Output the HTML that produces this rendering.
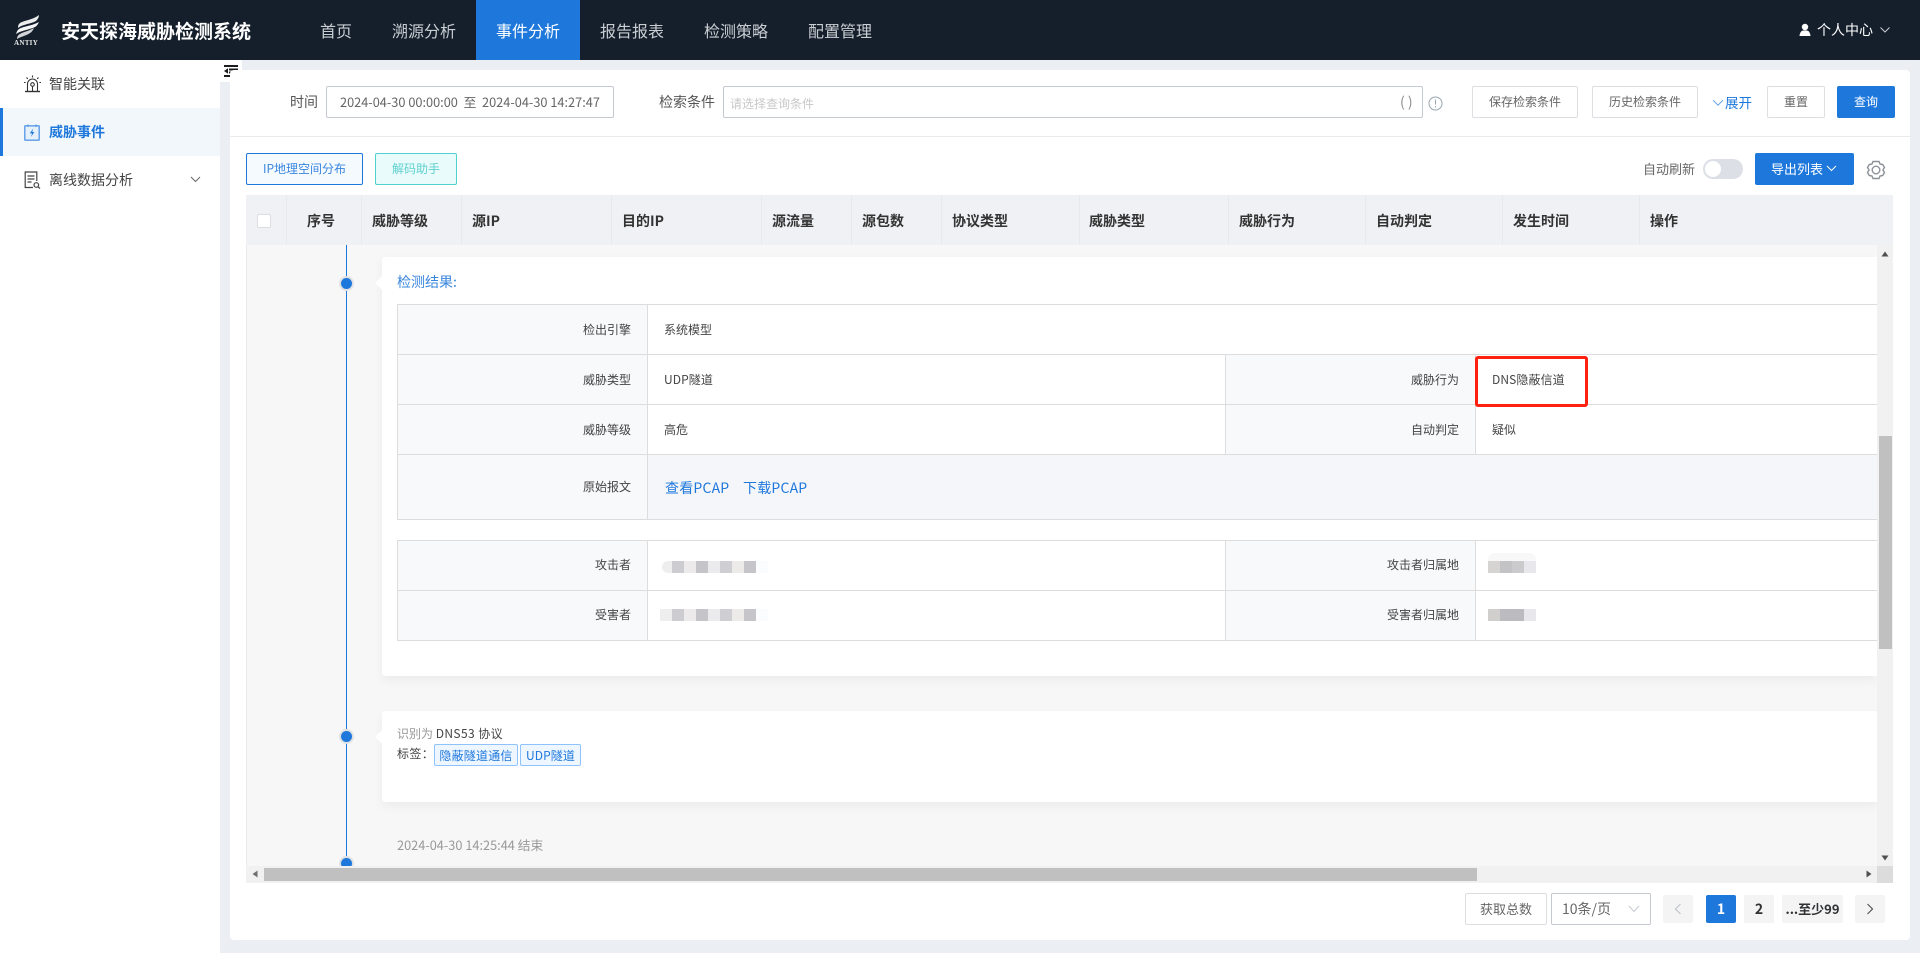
<!DOCTYPE html>
<html lang="zh-CN">
<head>
<meta charset="utf-8">
<title>安天探海威胁检测系统</title>
<style>
html,body{margin:0;padding:0;width:1920px;height:953px;overflow:hidden;background:#ebeef3;}
body{position:relative;font-family:"Noto Sans CJK SC","Liberation Sans",sans-serif;font-size:12px;color:#333;}
div,span,a,svg{position:absolute;box-sizing:border-box;}
.t{white-space:nowrap;line-height:20px;height:20px;}
.nav{font-size:16px;color:#c9ced3;top:19px;line-height:22px;height:22px;white-space:nowrap;}
.b{border:1px solid #dcdee2;border-radius:2px;background:#fff;text-align:center;line-height:30px;color:#666;font-size:12px;white-space:nowrap;}
.th{font-size:14px;font-weight:700;color:#333;top:211px;white-space:nowrap;line-height:20px;}
.cs{top:195px;width:1px;height:49px;background:#e8e9ee;}
.lab{background:#f8f9fb;}
.hl{left:397px;width:1480px;height:1px;background:#dddddd;}
.vl{width:1px;background:#dddddd;}
.r{font-size:12px;color:#444;white-space:nowrap;text-align:right;line-height:20px;}
.v{font-size:12px;color:#444;white-space:nowrap;line-height:20px;}
.m{height:12px;width:12px;}
.pg{top:895px;height:28px;background:#f4f4f5;border-radius:2px;text-align:center;line-height:28px;font-weight:700;font-size:13px;color:#303133;white-space:nowrap;}
</style>
</head>
<body>
<!-- Header -->
<div style="left:0;top:0;width:1920px;height:60px;background:#151f2b;"></div>
<svg style="left:14px;top:14px;" width="28" height="26" viewBox="0 0 28 26">
<path d="M25 1 C20 5 13 6 8 8 C5 9 4 11 4 14 C9 10 17 10 22 7 C24 5 25 3 25 1Z" fill="#ececec"/>
<path d="M25 8 C20 11 12 12 7 14 C4 15 3 17 2 20 C8 16 15 16 21 13 C23 12 24 10 25 8Z" fill="#f6f6f6"/>
<path d="M20 14 C15 17 9 18 6 20 C4 21 3 23 3 25 C8 22 12 22 16 19 C18 18 19 16 20 14Z" fill="#d2d4d7"/>
</svg>
<div class="t" style="left:14px;top:39px;width:24px;text-align:center;font:bold 7px/9px 'Liberation Serif',serif;color:#e8e8e8;letter-spacing:.3px;height:9px;">ANTIY</div>
<div class="t" style="left:61px;top:18px;font-size:19px;font-weight:700;color:#fff;line-height:26px;height:26px;">安天探海威胁检测系统</div>
<div style="left:476px;top:0;width:104px;height:60px;background:#1e78dc;"></div>
<div class="nav" style="left:320px;">首页</div>
<div class="nav" style="left:392px;">溯源分析</div>
<div class="nav" style="left:496px;color:#fff;">事件分析</div>
<div class="nav" style="left:600px;">报告报表</div>
<div class="nav" style="left:704px;">检测策略</div>
<div class="nav" style="left:808px;">配置管理</div>
<svg style="left:1798px;top:23px;" width="14" height="14" viewBox="0 0 14 14"><circle cx="7" cy="4" r="3.2" fill="#fff"/><path d="M1.5 13 Q2 8 5 7.5 L9 7.5 Q12 8 12.5 13Z" fill="#fff"/></svg>
<div class="t" style="left:1817px;top:20px;font-size:14px;color:#fff;">个人中心</div>
<svg style="left:1879px;top:26px;" width="12" height="8" viewBox="0 0 12 8"><path d="M1.5 1.5 L6 6 L10.5 1.5" fill="none" stroke="#c9ced3" stroke-width="1"/></svg>

<!-- Sidebar -->
<div style="left:0;top:60px;width:220px;height:893px;background:#fff;"></div>
<div style="left:220px;top:60px;width:22px;height:22px;background:#fff;"></div>
<svg style="left:224px;top:65px;" width="14" height="12" viewBox="0 0 14 12"><path d="M0 1h14M5 4.500h9M5 7.500h9M0 11h14" stroke="#1c1c1c" stroke-width="2" fill="none"/><path d="M4 3.200 L0 6 L4 8.800Z" fill="#1c1c1c"/></svg>
<div style="left:0;top:108px;width:220px;height:48px;background:#f2f7fc;"></div>
<div style="left:0;top:108px;width:3px;height:48px;background:#1e78dc;"></div>
<svg style="left:24px;top:75px;" width="17" height="18" viewBox="0 0 17 18" fill="none" stroke="#333" stroke-width="1.1"><path d="M3.5 16V9a5 5 0 0 1 10 0v7"/><path d="M1 16.5h15" stroke-width="1.4"/><circle cx="8.5" cy="9.5" r="1.8"/><path d="M8.500 11v5M8.500 0.500v2M2.500 2.500l1.300 1.300M14.500 2.500l-1.300 1.300M0 7.500h1.600M15.400 7.500H17"/></svg>
<svg style="left:24px;top:124px;" width="16" height="17" viewBox="0 0 16 17" fill="none"><rect x=".8" y="1.8" width="14.4" height="14.4" fill="#e6f0fb" stroke="#5a9be6" stroke-width="1.4" rx=".5"/><path d="M4 .5v2.500M12 .5v2.500" stroke="#5a9be6" stroke-width="1.200"/><path d="M9.200 4.500 L5.800 9.400h2.300l-1.200 3.600 3.500-5H8.200Z" fill="#1e78dc"/></svg>
<svg style="left:24px;top:171px;" width="17" height="18" viewBox="0 0 17 18" fill="none" stroke="#444" stroke-width="1.200"><path d="M9 16.500H1.200V1h11.600v9"/><path d="M3.500 5h7M3.500 8h7M3.500 11h4"/><circle cx="12.300" cy="14" r="2.300"/><path d="M14 15.700l2 1.800"/></svg>
<div class="t" style="left:49px;top:74px;font-size:14px;color:#444;">智能关联</div>
<div class="t" style="left:49px;top:122px;font-size:14px;font-weight:700;color:#1e78dc;">威胁事件</div>
<div class="t" style="left:49px;top:170px;font-size:14px;color:#444;">离线数据分析</div>
<svg style="left:190px;top:176px;" width="11" height="7" viewBox="0 0 11 7"><path d="M1 1 L5.500 5.500 L10 1" fill="none" stroke="#666" stroke-width="1"/></svg>

<!-- Main card -->
<div style="left:230px;top:70px;width:1680px;height:870px;background:#fff;border-radius:4px;"></div>
<div style="left:230px;top:136px;width:1680px;height:1px;background:#e8eaec;"></div>

<!-- Search row -->
<div class="t" style="left:290px;top:92px;font-size:14px;color:#555;">时间</div>
<div style="left:326px;top:86px;width:288px;height:32px;border:1px solid #c5c9d0;border-radius:2px;"></div>
<div class="t" style="left:340px;top:92px;font-size:12.750px;color:#666;">2024-04-30 00:00:00 &nbsp;至&nbsp; 2024-04-30 14:27:47</div>
<div class="t" style="left:659px;top:92px;font-size:14px;color:#555;">检索条件</div>
<div style="left:723px;top:86px;width:700px;height:32px;border:1px solid #c5c9d0;border-radius:2px;"></div>
<div class="t" style="left:730px;top:94px;font-size:12px;color:#c8c8c8;">请选择查询条件</div>
<div class="t" style="left:1400px;top:92px;font-size:14px;color:#888;">( )</div>
<svg style="left:1428px;top:96px;" width="15" height="15" viewBox="0 0 15 15" fill="none" stroke="#9aa7b0"><circle cx="7.500" cy="7.500" r="6.500"/><path d="M7.500 3.500v5M7.500 10v1.500"/></svg>
<div class="b" style="left:1472px;top:86px;width:106px;height:32px;">保存检索条件</div>
<div class="b" style="left:1592px;top:86px;width:106px;height:32px;">历史检索条件</div>
<svg style="left:1712px;top:99px;" width="12" height="8" viewBox="0 0 12 8"><path d="M1 1.200 L6 6.200 L11 1.200" fill="none" stroke="#5a9be6" stroke-width="1"/></svg>
<div class="t" style="left:1725px;top:92px;font-size:13.500px;color:#1e78dc;">展开</div>
<div class="b" style="left:1767px;top:86px;width:58px;height:32px;">重置</div>
<div class="b" style="left:1837px;top:86px;width:58px;height:32px;background:#1e78dc;border-color:#1e78dc;color:#fff;">查询</div>

<!-- Toolbar row -->
<div class="b" style="left:246px;top:153px;width:117px;height:32px;background:#f5faff;border-color:#1e78dc;color:#3a86dd;">IP地理空间分布</div>
<div class="b" style="left:375px;top:153px;width:82px;height:32px;background:#e9fbfa;border-color:#4fd2cf;color:#5fd0d0;">解码助手</div>
<div class="t" style="left:1643px;top:159px;font-size:13px;color:#666;">自动刷新</div>
<div style="left:1703px;top:159px;width:40px;height:20px;background:#dcdfe6;border-radius:10px;"></div>
<div style="left:1705px;top:161px;width:16px;height:16px;background:#fff;border-radius:50%;"></div>
<div class="b" style="left:1755px;top:153px;width:99px;height:32px;background:#1e78dc;border-color:#1e78dc;color:#fff;padding-right:15px;font-size:13px;">导出列表</div>
<svg style="left:1826px;top:165px;" width="11" height="7" viewBox="0 0 11 7"><path d="M1 1 L5.500 5.500 L10 1" fill="none" stroke="#fff" stroke-width="1"/></svg>
<svg style="left:1866px;top:160px;" width="20" height="20" viewBox="0 0 20 20" fill="none" stroke="#8c9198" stroke-width="1.400"><path d="M7 1.500h6l1 2.500 2.700.5 1.800 3-1.600 2.500 1.600 2.500-1.800 3-2.700.5-1 2.500H7l-1-2.500-2.700-.5-1.800-3L3.100 10 1.500 7.500l1.800-3L6 4z"/><circle cx="10" cy="10" r="3.800"/></svg>

<!-- Table header -->
<div style="left:246px;top:195px;width:1647px;height:50px;background:#f0f1f5;"></div>
<div class="cs" style="left:286px;"></div><div class="cs" style="left:361px;"></div><div class="cs" style="left:461px;"></div><div class="cs" style="left:611px;"></div><div class="cs" style="left:761px;"></div><div class="cs" style="left:851px;"></div><div class="cs" style="left:941px;"></div><div class="cs" style="left:1079px;"></div><div class="cs" style="left:1228px;"></div><div class="cs" style="left:1365px;"></div><div class="cs" style="left:1502px;"></div><div class="cs" style="left:1639px;"></div>
<div style="left:257px;top:214px;width:14px;height:14px;background:#fff;border:1px solid #dcdee2;border-radius:2px;"></div>
<div class="th" style="left:307px;">序号</div>
<div class="th" style="left:372px;">威胁等级</div>
<div class="th" style="left:472px;">源IP</div>
<div class="th" style="left:622px;">目的IP</div>
<div class="th" style="left:772px;">源流量</div>
<div class="th" style="left:862px;">源包数</div>
<div class="th" style="left:952px;">协议类型</div>
<div class="th" style="left:1089px;">威胁类型</div>
<div class="th" style="left:1239px;">威胁行为</div>
<div class="th" style="left:1376px;">自动判定</div>
<div class="th" style="left:1513px;">发生时间</div>
<div class="th" style="left:1650px;">操作</div>

<!-- Table body -->
<div style="left:246px;top:245px;width:1631px;height:621px;background:#f7f7f7;border-left:1px solid #e8eaec;"></div>
<div style="left:346px;top:245px;width:1px;height:613px;background:#1e78dc;"></div>

<!-- Detection card -->
<div style="left:382px;top:257px;width:1495px;height:419px;background:#fff;border-radius:3px 0 0 3px;box-shadow:0 4px 10px rgba(0,0,0,.05);"></div>
<div style="left:375px;top:276px;width:14px;height:14px;background:#fff;transform:rotate(45deg) scale(.7);"></div>
<div style="left:341px;top:278px;width:11px;height:11px;border-radius:50%;background:#1e78dc;box-shadow:0 0 0 2px #dfe1e4;"></div>
<div class="t" style="left:397px;top:272px;color:#3a86dd;font-size:14px;">检测结果:</div>

<!-- Result table -->
<div class="lab" style="left:398px;top:305px;width:249px;height:214px;"></div>
<div class="lab" style="left:1225px;top:355px;width:250px;height:99px;"></div>
<div style="left:648px;top:455px;width:1229px;height:64px;background:#f5f6fa;"></div>
<div class="hl" style="top:304px;"></div><div class="hl" style="top:354px;"></div><div class="hl" style="top:404px;"></div><div class="hl" style="top:454px;"></div><div class="hl" style="top:519px;"></div>
<div class="vl" style="left:397px;top:304px;height:216px;"></div>
<div class="vl" style="left:647px;top:304px;height:216px;"></div>
<div class="vl" style="left:1225px;top:354px;height:100px;"></div>
<div class="vl" style="left:1475px;top:354px;height:100px;"></div>
<div class="r" style="left:583px;top:320px;width:48px;">检出引擎</div>
<div class="r" style="left:583px;top:370px;width:48px;">威胁类型</div>
<div class="r" style="left:583px;top:420px;width:48px;">威胁等级</div>
<div class="r" style="left:583px;top:477px;width:48px;">原始报文</div>
<div class="v" style="left:664px;top:320px;">系统模型</div>
<div class="v" style="left:664px;top:370px;letter-spacing:.1px;">UDP隧道</div>
<div class="v" style="left:664px;top:420px;">高危</div>
<div class="t" style="left:665px;top:478px;font-size:14px;color:#1e78dc;letter-spacing:.2px;">查看PCAP</div>
<div class="t" style="left:743px;top:478px;font-size:14px;color:#1e78dc;letter-spacing:.2px;">下载PCAP</div>
<div class="r" style="left:1400px;top:370px;width:59px;">威胁行为</div>
<div class="r" style="left:1400px;top:420px;width:59px;">自动判定</div>
<div class="v" style="left:1492px;top:370px;letter-spacing:.1px;">DNS隐蔽信道</div>
<div class="v" style="left:1492px;top:420px;">疑似</div>
<div style="left:1475px;top:356px;width:113px;height:51px;border:3px solid #ff2010;border-radius:3px;"></div>

<!-- Attacker table -->
<div class="lab" style="left:398px;top:541px;width:249px;height:99px;"></div>
<div class="lab" style="left:1225px;top:541px;width:250px;height:99px;"></div>
<div class="hl" style="top:540px;"></div><div class="hl" style="top:590px;"></div><div class="hl" style="top:640px;"></div>
<div class="vl" style="left:397px;top:540px;height:101px;"></div>
<div class="vl" style="left:647px;top:540px;height:101px;"></div>
<div class="vl" style="left:1225px;top:540px;height:101px;"></div>
<div class="vl" style="left:1475px;top:540px;height:101px;"></div>
<div class="r" style="left:583px;top:555px;width:48px;">攻击者</div>
<div class="r" style="left:583px;top:605px;width:48px;">受害者</div>
<div class="r" style="left:1370px;top:555px;width:89px;">攻击者归属地</div>
<div class="r" style="left:1370px;top:605px;width:89px;">受害者归属地</div>

<!-- Mosaic blocks -->
<div class="m" style="left:662px;top:561px;background:#eeeeee;border-radius:6px 0 0 6px;"></div><div class="m" style="left:672px;top:561px;background:#cdccd0;"></div><div class="m" style="left:684px;top:561px;background:#eceaea;"></div><div class="m" style="left:696px;top:561px;background:#c5c4c8;"></div><div class="m" style="left:708px;top:561px;background:#ebebee;"></div><div class="m" style="left:720px;top:561px;background:#cfced2;"></div><div class="m" style="left:732px;top:561px;background:#ecebea;"></div><div class="m" style="left:744px;top:561px;background:#c6c5c9;"></div><div class="m" style="left:756px;top:561px;background:#fbfcfd;"></div>
<div class="m" style="left:660px;top:609px;background:#eeeeee;"></div><div class="m" style="left:672px;top:609px;background:#cdccd0;"></div><div class="m" style="left:684px;top:609px;background:#eceaea;"></div><div class="m" style="left:696px;top:609px;background:#c5c4c8;"></div><div class="m" style="left:708px;top:609px;background:#ebebee;"></div><div class="m" style="left:720px;top:609px;background:#cfced2;"></div><div class="m" style="left:732px;top:609px;background:#ecebea;"></div><div class="m" style="left:744px;top:609px;background:#c6c5c9;"></div><div class="m" style="left:756px;top:609px;background:#fbfcfd;"></div>
<div style="left:1488px;top:553px;width:48px;height:8px;background:#f8f8f8;border-radius:6px 6px 0 0;"></div>
<div class="m" style="left:1488px;top:561px;background:#d5d4d2;"></div><div class="m" style="left:1500px;top:561px;background:#c3c3c5;"></div><div class="m" style="left:1512px;top:561px;background:#cbcbcd;"></div><div class="m" style="left:1524px;top:561px;background:#e8e8ec;"></div>
<div class="m" style="left:1488px;top:609px;background:#d1cfcd;"></div><div class="m" style="left:1500px;top:609px;background:#bcbcc0;"></div><div class="m" style="left:1512px;top:609px;background:#bcbcc0;"></div><div class="m" style="left:1524px;top:609px;background:#e8e8ec;"></div>

<!-- Protocol card -->
<div style="left:382px;top:711px;width:1495px;height:91px;background:#fff;border-radius:3px 0 0 3px;box-shadow:0 4px 10px rgba(0,0,0,.05);"></div>
<div style="left:375px;top:730px;width:14px;height:14px;background:#fff;transform:rotate(45deg) scale(.7);"></div>
<div style="left:341px;top:731px;width:11px;height:11px;border-radius:50%;background:#1e78dc;box-shadow:0 0 0 2px #dfe1e4;"></div>
<div class="t" style="left:397px;top:724px;color:#999;">识别为 <span style="position:static;color:#444;letter-spacing:.4px;">DNS53 协议</span></div>
<div class="t" style="left:397px;top:744px;color:#444;letter-spacing:.4px;">标签：</div>
<div style="left:434px;top:744px;width:84px;height:22px;background:#eef6ff;border:1px solid #8ec3ff;border-radius:2px;color:#1e78dc;text-align:center;line-height:21px;white-space:nowrap;letter-spacing:.2px;">隐蔽隧道通信</div>
<div style="left:520px;top:744px;width:61px;height:22px;background:#eef6ff;border:1px solid #8ec3ff;border-radius:2px;color:#1e78dc;text-align:center;line-height:21px;white-space:nowrap;letter-spacing:.1px;">UDP隧道</div>

<div class="t" style="left:397px;top:835px;font-size:12.750px;color:#999;">2024-04-30 14:25:44 结束</div>
<div style="left:341px;top:858px;width:11px;height:11px;border-radius:50%;background:#1e78dc;box-shadow:0 0 0 2px #dfe1e4;"></div>

<!-- Scrollbars -->
<div style="left:1877px;top:245px;width:16px;height:621px;background:#f1f1f1;"></div>
<div style="left:1879px;top:436px;width:13px;height:213px;background:#c0c0c0;"></div>
<svg style="left:1881px;top:251px;" width="8" height="6"><path d="M4 .5L7.500 5.500H.5Z" fill="#505050"/></svg>
<svg style="left:1881px;top:855px;" width="8" height="6"><path d="M4 5.500L7.500 .5H.5Z" fill="#505050"/></svg>
<div style="left:246px;top:866px;width:1631px;height:17px;background:#f1f1f1;"></div>
<div style="left:264px;top:868px;width:1213px;height:13px;background:#c0c0c0;"></div>
<svg style="left:252px;top:870px;" width="6" height="8"><path d="M.5 4L5.500 .5V7.500Z" fill="#6e6e6e"/></svg>
<svg style="left:1866px;top:870px;" width="6" height="8"><path d="M5.500 4L.5 .5V7.500Z" fill="#505050"/></svg>
<div style="left:1877px;top:866px;width:16px;height:17px;background:#dcdcdc;"></div>

<!-- Pagination -->
<div class="b" style="left:1465px;top:893px;width:82px;height:32px;font-size:13px;">获取总数</div>
<div style="left:1551px;top:893px;width:100px;height:32px;border:1px solid #c5c9d0;border-radius:2px;"></div>
<div class="t" style="left:1562px;top:899px;font-size:14px;color:#666;">10条/页</div>
<svg style="left:1628px;top:905px;" width="12" height="8" viewBox="0 0 12 8"><path d="M1 1 L6 6.500 L11 1" fill="none" stroke="#c5c9d0" stroke-width="1"/></svg>
<div class="pg" style="left:1663px;width:30px;"></div>
<svg style="left:1674px;top:903px;" width="8" height="12" viewBox="0 0 8 12"><path d="M6.500 1L1.500 6L6.500 11" fill="none" stroke="#c0c4cc" stroke-width="1.200"/></svg>
<div class="pg" style="left:1706px;width:30px;background:#1e78dc;color:#fff;font-size:14px;">1</div>
<div class="pg" style="left:1744px;width:30px;font-size:14px;">2</div>
<div class="pg" style="left:1782px;width:61px;">...至少99</div>
<div class="pg" style="left:1855px;width:30px;"></div>
<svg style="left:1866px;top:903px;" width="8" height="12" viewBox="0 0 8 12"><path d="M1.500 1L6.500 6L1.500 11" fill="none" stroke="#555" stroke-width="1.200"/></svg>
</body>
</html>
